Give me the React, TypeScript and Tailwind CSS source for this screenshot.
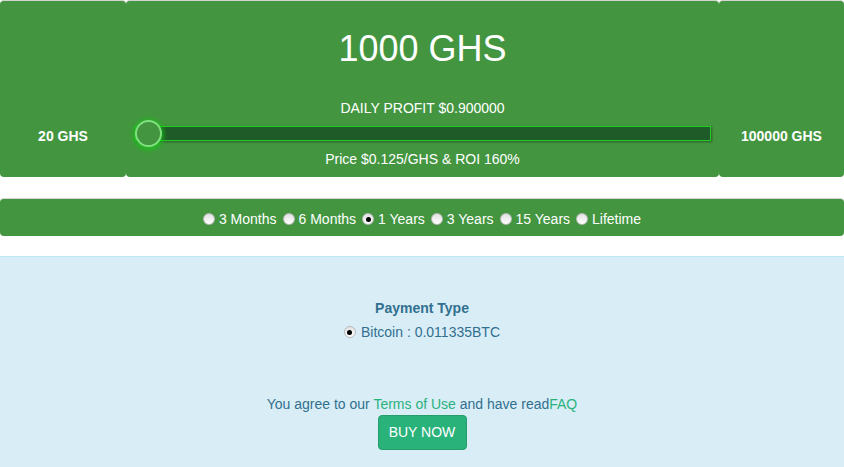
import React from 'react'

const periods = [
  { label: '3 Months', checked: false },
  { label: '6 Months', checked: false },
  { label: '1 Years', checked: true },
  { label: '3 Years', checked: false },
  { label: '15 Years', checked: false },
  { label: 'Lifetime', checked: false },
]

function Radio({ checked }: { checked?: boolean }) {
  return (
    <span className="inline-flex h-[12px] w-[12px] items-center justify-center rounded-full border border-[#b8b8b8] bg-gradient-to-b from-[#e2e2e2] to-white">
      {checked && <span className="h-[5px] w-[5px] rounded-full bg-black" />}
    </span>
  )
}

export default function App() {
  return (
    <div className="min-h-[467px] w-[844px] bg-white font-['Liberation_Sans',Arial,sans-serif] text-[14px] text-white">
      {/* Hashrate slider */}
      <div className="flex h-[177px]">
        <div className="flex w-[126px] items-end justify-center rounded-[4px] border-t border-[#d4d4d4] bg-[#43963f] pb-[30px] font-bold">
          20 GHS
        </div>
        <div className="flex flex-1 flex-col items-center rounded-[4px] border-t border-[#d4d4d4] bg-[#43963f] px-[8px] pt-[28px]">
          <div className="text-[36px] leading-[40px]">1000 GHS</div>
          <div className="mt-[29px] leading-[20px]">DAILY PROFIT $0.900000</div>
          <div className="relative mt-[8px] h-[15px] w-full pl-[1px]">
            <div className="h-full w-full border border-[#22cc22] bg-[#1f5b28] shadow-[1px_1px_2px_rgba(0,0,0,0.4)]" />
            <div className="absolute left-[1px] top-[-6px] h-[27px] w-[27px] rounded-full border-2 border-[#7fe07f] bg-[#43963f] shadow-[0_1px_4px_2px_rgba(20,200,20,0.7)]" />
          </div>
          <div className="mt-[8px] leading-[20px]">Price $0.125/GHS &amp; ROI 160%</div>
        </div>
        <div className="flex w-[125px] items-end justify-center rounded-[4px] border-t border-[#d4d4d4] bg-[#43963f] pb-[30px] font-bold">
          100000 GHS
        </div>
      </div>

      {/* Contract length */}
      <div className="mt-[21px] flex h-[38px] items-center justify-center gap-[6px] rounded-[4px] border-t border-[#d4d4d4] bg-[#43963f] pt-[3px]">
        {periods.map((p) => (
          <label key={p.label} className="flex items-center gap-[4px]">
            <Radio checked={p.checked} />
            <span>{p.label}</span>
          </label>
        ))}
      </div>

      {/* Payment */}
      <div className="mt-[20px] flex h-[211px] flex-col items-center border-t border-[#bce8f1] bg-[#d9edf7] pt-[41px] text-[#31708f]">
        <div className="font-bold leading-[20px]">Payment Type</div>
        <div className="mt-[4px] flex items-center gap-[5px] leading-[20px]">
          <Radio checked />
          <span>Bitcoin : 0.011335BTC</span>
        </div>
        <div className="mt-[52px] leading-[20px]">
          You agree to our <a className="text-[#2ab27b]">Terms of Use</a> and have read<a className="text-[#2ab27b]">FAQ</a>
        </div>
        <button className="mt-[1px] h-[35px] w-[89px] rounded-[4px] border border-[#259d6d] bg-[#2ab27b] text-[14px] text-white">
          BUY NOW
        </button>
      </div>
    </div>
  )
}
